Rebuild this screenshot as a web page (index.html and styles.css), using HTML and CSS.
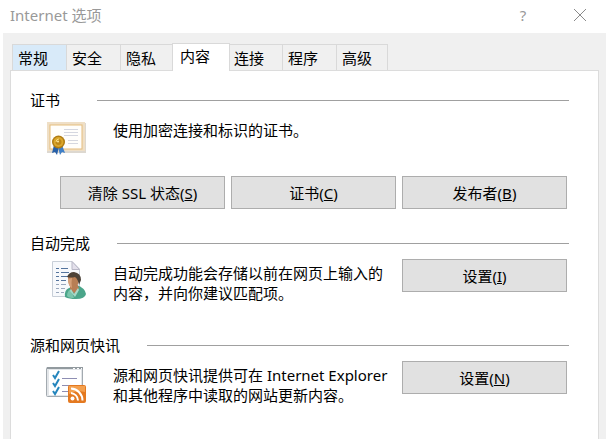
FILE: index.html
```html
<!DOCTYPE html>
<html lang="zh-CN">
<head>
  <meta charset="UTF-8" />
  <meta name="viewport" content="width=device-width, initial-scale=1.0"/>
  <title>Internet 选项</title>
  <link rel="stylesheet" href="styles.css">
</head>
<body>
  <header class="titlebar">
    <h1>Internet 选项</h1>
    <button class="window-button" aria-label="帮助">?</button>
    <button class="window-button" aria-label="关闭">
      <svg width="14" height="14" viewBox="0 0 14 14" fill="none" stroke="#8a8a8a">
        <path d="M1 1 L13 13 M13 1 L1 13"/>
      </svg>
    </button>
  </header>

  <main class="dialog">
    <nav class="tabs" role="tablist">
      <button class="tab hover" role="tab">常规</button>
      <button class="tab" role="tab">安全</button>
      <button class="tab" role="tab">隐私</button>
      <button class="tab active" role="tab" aria-selected="true">内容</button>
      <button class="tab" role="tab">连接</button>
      <button class="tab" role="tab">程序</button>
      <button class="tab" role="tab">高级</button>
    </nav>

    <div class="panel" role="tabpanel">
      <section class="group">
        <h2><span>证书</span></h2>
        <div class="row">
          <svg class="icon" width="42" height="46" viewBox="0 -4 42 46">
            <rect x="2" y="3" width="39" height="30" fill="#ddd8d0"/>
            <rect x="2" y="2" width="38" height="29" fill="#efdfc6"/>
            <rect x="5" y="5" width="32" height="24" fill="#fffefb" stroke="#e5bd7c"/>
            <path d="M19 9.5h14M19 12.5h14M19 15.5h14M23 20.5h10M23 23.5h10" stroke="#d5d7df"/>
            <path d="M9 25 L7 33 L10 32 L12 35 L14 27z" fill="#2860a8"/>
            <path d="M13 27 L15 35 L17 32 L20 33 L17 25z" fill="#3f7fc8"/>
            <circle cx="13.5" cy="22" r="6.5" fill="#b07c12"/>
            <circle cx="13.5" cy="22" r="5" fill="#dba72b"/>
            <circle cx="13.5" cy="22" r="3" fill="#bd8718"/>
            <path d="M11 22 Q11 19 14 19" fill="none" stroke="#f8dc7b"/>
            <circle cx="13" cy="21.5" r="1" fill="#ffe99b"/>
          </svg>
          <p>使用加密连接和标识的证书。</p>
        </div>
        <div class="buttons">
          <button class="push">清除 SSL 状态(<u>S</u>)</button>
          <button class="push">证书(<u>C</u>)</button>
          <button class="push">发布者(<u>B</u>)</button>
        </div>
      </section>

      <section class="group">
        <h2><span>自动完成</span></h2>
        <div class="row">
          <svg class="icon" width="42" height="42" viewBox="0 0 42 42">
            <path d="M7.500 2.500 H27 L34.500 10 V37.500 H7.500z" fill="#f7f9fc" stroke="#c8cfd8"/>
            <path d="M27 2.500 V10.500 H34.500z" fill="#e3e0eb" stroke="#b9b8c7"/>
            <path d="M11 9.500h3M16 9.500h7M11 13.500h3M16 13.500h8M11 17.500h3M16 17.500h7M11 21.500h3M16 21.500h5" stroke="#54749d"/>
            <path d="M11 25.500h3M16 25.500h5M11 29.500h3M16 29.500h4M11 33.500h3M16 33.500h3" stroke="#9aa8bd"/>
            <path d="M20 38 Q19 31 24 29 L32 26 Q40 29 41 35 Q40 40 31 40 Q24 40 20 38z" fill="#4ba58a"/>
            <path d="M22 37 Q22 32 26 30 L29 39 Q24 39 22 37z" fill="#7bc5ac"/>
            <path d="M25 27 L32 25 L34 29 L30 35 L25 30z" fill="#b97d55"/>
            <path d="M26 30 L29 35 L33 29 L34 31 L30 38 L25 32z" fill="#a9d8c8"/>
            <path d="M23 18 Q23 28 28 30 Q34 28 34 19 Q29 15 23 18z" fill="#b87e54"/>
            <path d="M23 20 Q23 27 27 29 Q26 24 27 19z" fill="#d6a078"/>
            <path d="M22 18 Q24 13 29 13 Q36 14 36 21 L34 26 Q33 20 30 18 Q26 19 22 18z" fill="#4c4237"/>
          </svg>
          <p>自动完成功能会存储以前在网页上输入的内容，并向你建议匹配项。</p>
          <button class="push">设置(<u>I</u>)</button>
        </div>
      </section>

      <section class="group">
        <h2><span>源和网页快讯</span></h2>
        <div class="row">
          <svg class="icon" width="42" height="42" viewBox="0 0 42 42">
            <rect x="1.500" y="6.500" width="36" height="29" rx="1" fill="#e3e6e9" stroke="#a3aab0"/>
            <path d="M2 8 V6 H38 V8z" fill="#929a9f"/>
            <path d="M28 7.500h2M32 7.500h2M36 7.500h1" stroke="#fff"/>
            <rect x="4" y="9" width="32" height="25" fill="#fff"/>
            <path d="M17 17.500h15M17 24.500h10M17 30.500h6" stroke="#8e8eb3"/>
            <path d="M8 14 L10 17 L14 10M8 22 L10 25 L14 18M8 30 L10 33 L14 26" fill="none" stroke="#2586bd" stroke-width="2"/>
            <rect x="23" y="24" width="18" height="18" rx="2" fill="#e47920"/>
            <path d="M24 25 H40 V31 Q31 29 24 33z" fill="#f4a04e"/>
            <circle cx="27.500" cy="37.500" r="2" fill="#fff"/>
            <path d="M26 32 A8 8 0 0 1 33 39.500M26 27.500 A12 12 0 0 1 37.500 39.500" fill="none" stroke="#fff" stroke-width="2"/>
          </svg>
          <p>源和网页快讯提供可在 Internet Explorer 和其他程序中读取的网站更新内容。</p>
          <button class="push">设置(<u>N</u>)</button>
        </div>
      </section>
    </div>
  </main>
</body>
</html>
```
FILE: styles.css
```css
* {
  box-sizing: border-box;
}

body {
  display: flex;
  flex-direction: column;
  min-height: 100vh;
  margin: 0;
  background: #fff;
  color: #000;
  font-family: "Noto Sans", "Noto Sans CJK SC", sans-serif;
  font-size: 15px;
  line-height: 20px;
}

h1, h2, p {
  margin: 0;
  font-size: 15px;
  font-weight: 400;
}

button {
  padding: 0;
  color: inherit;
  font: inherit;
}

.titlebar {
  display: flex;
  align-items: center;
  height: 33px;
  padding: 0 12px 4px 10px;
  color: #999;
}

.titlebar h1 {
  flex: 1;
}

.window-button {
  display: flex;
  align-items: center;
  justify-content: center;
  width: 28px;
  height: 28px;
  margin-left: 29px;
  border: none;
  background: none;
}

.dialog {
  display: flex;
  flex: 1;
  flex-direction: column;
  margin-left: 3px;
  padding: 10px 7px 0;
  background: #f0f0f0;
}

.tabs {
  display: flex;
  align-items: flex-end;
  padding-left: 2px;
}

.tab {
  width: 54px;
  height: 26px;
  padding-left: 5px;
  border: 1px solid #d9d9d9;
  border-right: none;
  border-bottom: none;
  background: #f0f0f0;
  text-align: left;
}

.tab:last-child {
  width: 52px;
  border-right: 1px solid #d9d9d9;
}

.tab.hover {
  background: #d8eaf9;
}

.tab.active {
  z-index: 1;
  width: 58px;
  height: 28px;
  margin: 0 -2px -1px;
  padding: 0 0 4px 7px;
  border-right: 1px solid #d9d9d9;
  background: #fff;
}

.panel {
  flex: 1;
  padding: 19px 29px 0 19px;
  border: 1px solid #dcdcdc;
  border-bottom: none;
  background: #fff;
}

.group {
  margin-bottom: 24px;
}

.group:last-child {
  margin-bottom: 0;
}

.group h2 {
  display: flex;
  align-items: center;
  gap: 27px;
}

.group h2 span {
  min-width: 40px;
}

.group h2::after {
  flex: 1;
  height: 1px;
  background: #a0a0a0;
  content: "";
}

.row {
  display: flex;
  align-items: flex-start;
  min-height: 52px;
  margin: 6px 2px 0 15px;
}

.row p {
  flex: 1;
  margin: 4px 8px 0 26px;
}

.icon {
  flex: none;
}

.push {
  width: 165px;
  height: 33px;
  border: 1px solid #adadad;
  background: #e1e1e1;
}

.buttons {
  display: flex;
  justify-content: flex-end;
  gap: 6px;
  margin: 8px 2px 0 0;
}
```
